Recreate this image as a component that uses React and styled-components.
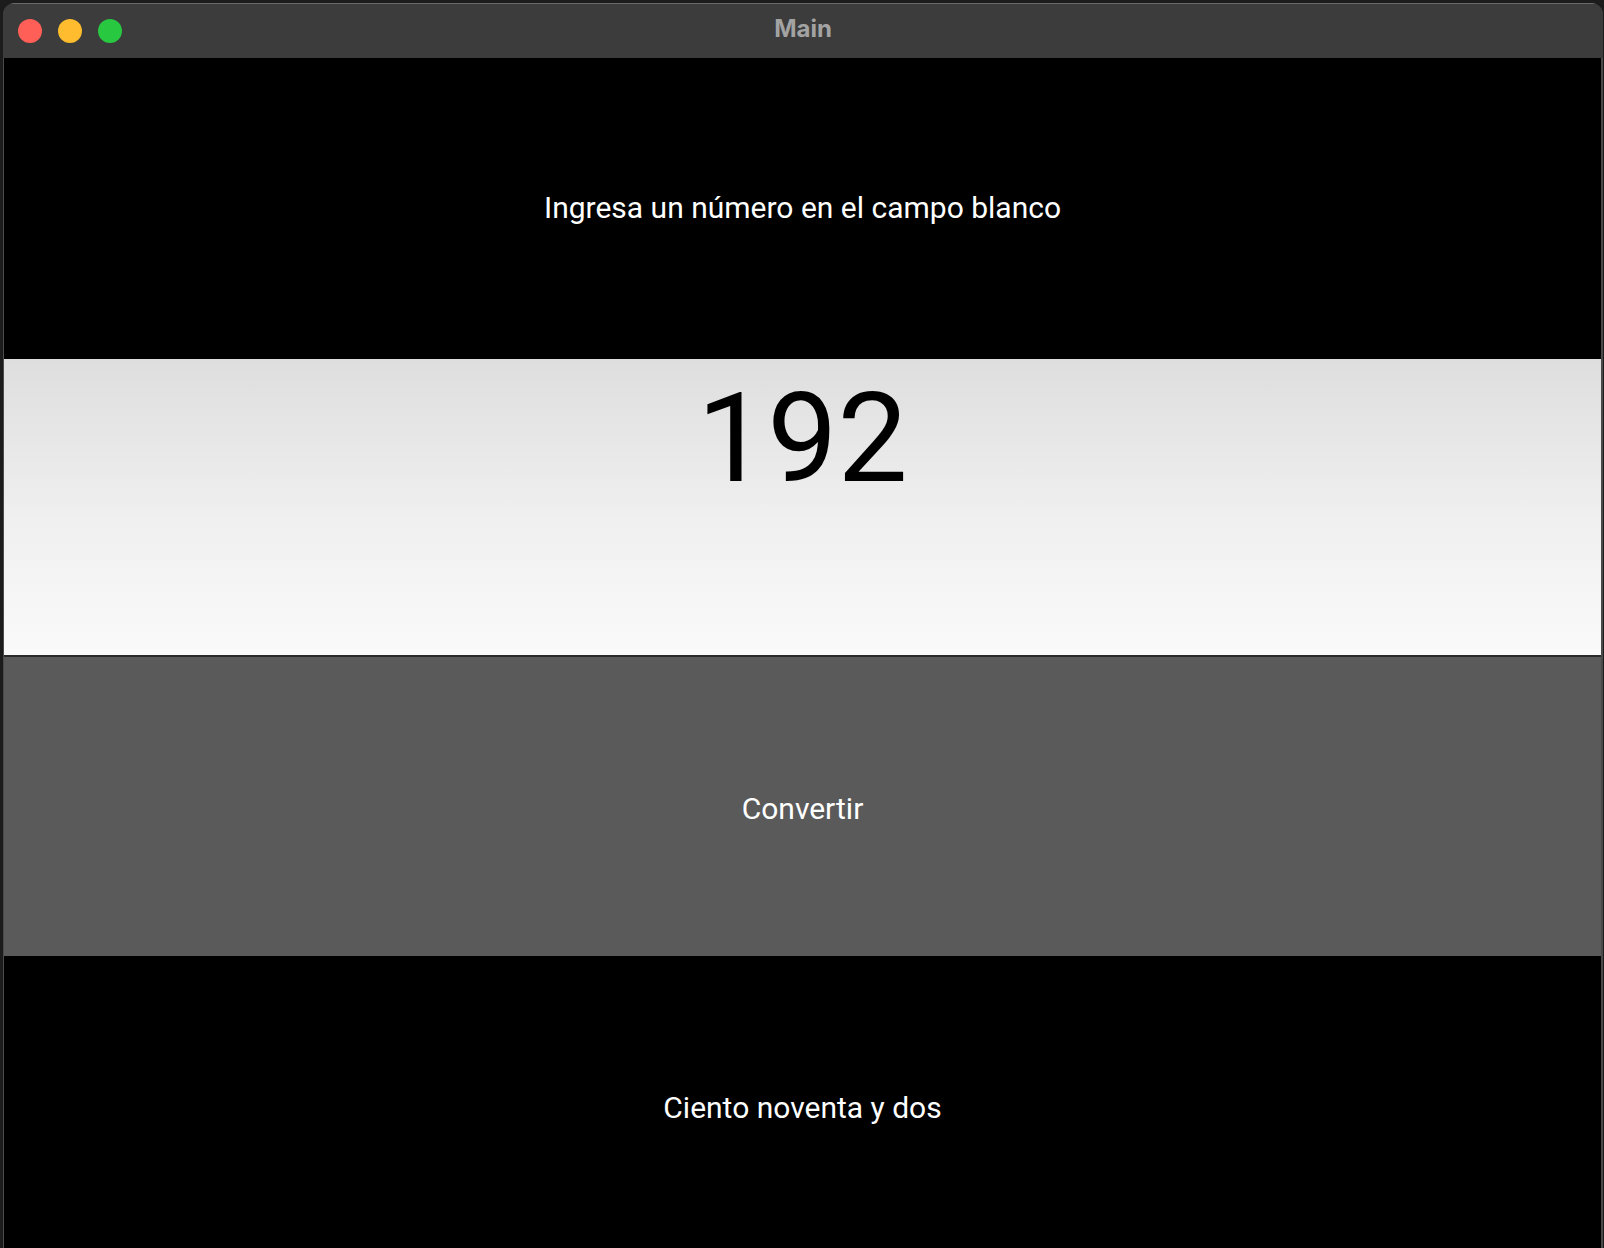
import React, { useState } from 'react';
import styled, { createGlobalStyle } from 'styled-components';

const GlobalStyle = createGlobalStyle`
  html, body {
    margin: 0;
    padding: 0;
    background: #1c1c1c;
    overflow: hidden;
  }
  body {
    height: 1248px;
    font-family: Roboto, "Noto Sans", sans-serif;
  }
`;

// Window chrome
const Window = styled.div`
  margin: 3px 0 0 3px;
  width: 1600px;
  border-radius: 12px 12px 0 0;
  overflow: hidden;
  box-shadow: inset 0 0 0 1px #5e5e5e;
  background: #000;
`;

const TitleBar = styled.div`
  height: 55px;
  background: #3c3c3c;
  display: flex;
  align-items: center;
  justify-content: center;
  position: relative;
  border-top: 1px solid #6a6a6a;
  box-sizing: border-box;
`;

const Lights = styled.div`
  position: absolute;
  left: 15px;
  top: 15px;
  display: flex;
  gap: 16px;
`;

const Light = styled.span`
  width: 24px;
  height: 24px;
  border-radius: 50%;
  background: ${(p) => p.color};
`;

const Title = styled.div`
  font-family: Inter, "Liberation Sans", sans-serif;
  font-weight: 700;
  font-size: 24px;
  color: #a3a3a3;
  margin-top: -5px;
`;

const Content = styled.div`
  display: flex;
  flex-direction: column;
  border-left: 1px solid #4a4a4a;
  border-right: 2px solid #4a4a4a;
`;

const Band = styled.div`
  height: ${(p) => p.h}px;
  background: ${(p) => p.bg};
  display: flex;
  align-items: center;
  justify-content: center;
  color: #fff;
  font-size: 30px;
  padding-top: ${(p) => (p.shift > 0 ? p.shift : 0)}px;
  padding-bottom: ${(p) => (p.shift < 0 ? -p.shift : 0)}px;
  box-sizing: border-box;
  cursor: ${(p) => (p.clickable ? 'pointer' : 'default')};
`;

const NumberField = styled.textarea`
  display: block;
  box-sizing: border-box;
  height: 298px;
  width: 100%;
  margin: 0;
  padding: 6px 0 0;
  border: none;
  border-bottom: 2px solid #2a2a2a;
  resize: none;
  overflow: hidden;
  outline: none;
  background: linear-gradient(180deg, #dedede 0%, #f0f0f0 55%, #fafafa 100%);
  font-family: Roboto, "Noto Sans", sans-serif;
  font-size: 125px;
  line-height: normal;
  text-align: center;
  color: #000;
`;

const words = {
  192: 'Ciento noventa y dos',
};

export default function App() {
  const [value, setValue] = useState('192');
  const [result, setResult] = useState('Ciento noventa y dos');

  const convert = () => {
    setResult(words[value] || result);
  };

  return (
    <>
      <GlobalStyle />
      <Window>
        <TitleBar>
          <Lights>
            <Light color="#ff5f57" />
            <Light color="#febc2e" />
            <Light color="#28c840" />
          </Lights>
          <Title>Main</Title>
        </TitleBar>
        <Content>
          <Band h={301} bg="#000" shift={-3}>Ingresa un número en el campo blanco</Band>
          <NumberField value={value} onChange={(e) => setValue(e.target.value)} />
          <Band h={299} bg="#5a5a5a" shift={3} clickable onClick={convert}>Convertir</Band>
          <Band h={300} bg="#000" shift={3}>{result}</Band>
        </Content>
      </Window>
    </>
  );
}
